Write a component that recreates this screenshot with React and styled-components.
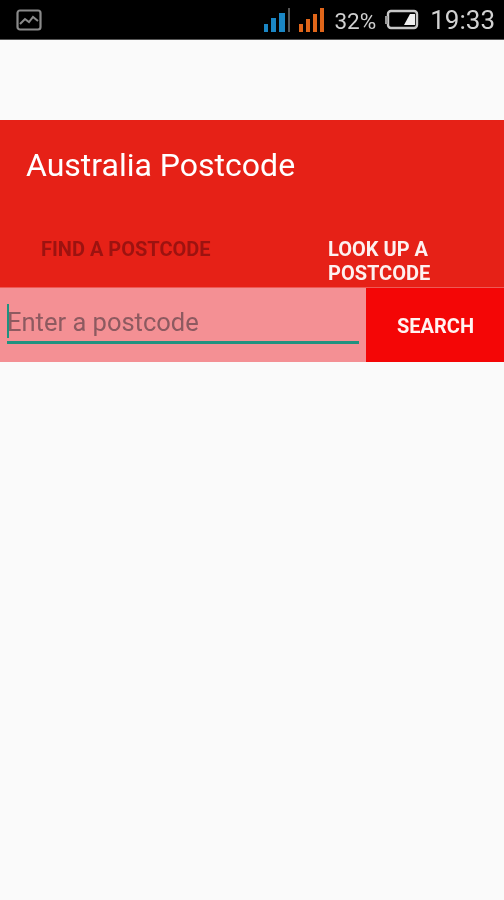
import React from "react";
import styled, { createGlobalStyle } from "styled-components";

const Global = createGlobalStyle`
  html, body { margin: 0; padding: 0; background: #fafafa; }
  * { box-sizing: border-box; }
`;

const Screen = styled.div`
  width: 504px;
  height: 900px;
  background: #fafafa;
  font-family: Roboto, "Liberation Sans", sans-serif;
  overflow: hidden;
  filter: blur(0.7px);
`;

const StatusBar = styled.div`
  height: 40px;
  background: #000;
  display: flex;
  align-items: center;
  padding: 0 9px 0 16px;
  border-bottom: 1px solid #555;
`;

const StatusRight = styled.div`
  margin-left: auto;
  display: flex;
  align-items: center;
`;

const Percent = styled.span`
  color: #cfcfcf;
  font-size: 22.5px;
  margin: 2px 9px 0 9px;
`;

const Clock = styled.span`
  color: #d2d2d2;
  font-size: 26px;
  margin-left: 11px;
`;

const TopGap = styled.div`
  height: 80px;
`;

const AppBar = styled.header`
  height: 167px;
  background: #e62117;
  display: flex;
  flex-direction: column;
`;

const Title = styled.h1`
  margin: 0;
  height: 90px;
  padding: 0 0 0 26px;
  display: flex;
  align-items: center;
  font-size: 32px;
  font-weight: 400;
  color: #fff;
`;

const Tabs = styled.div`
  flex: 1;
  display: flex;
`;

const Tab = styled.div`
  flex: 1;
  display: flex;
  justify-content: center;
  padding-top: 27px;
  padding-left: ${(p) => p.$inset}px;
`;

const TabLabel = styled.span`
  width: ${(p) => p.$width}px;
  font-size: 20px;
  line-height: 24px;
  font-weight: 700;
  color: ${(p) => (p.$active ? "#fdf1f0" : "#9c1310")};
`;

const SearchRow = styled.div`
  height: 75px;
  display: flex;
  border-top: 1px solid #ee5a55;
`;

const Field = styled.div`
  width: 366px;
  background: #f49094;
  padding: 15px 7px 0;
`;

const InputBox = styled.div`
  height: 41px;
  border-bottom: 3px solid #20917f;
  display: flex;
  align-items: center;
  padding-bottom: 2px;
`;

const Caret = styled.span`
  width: 2px;
  height: 34px;
  margin-right: -2px;
  background: #20917f;
`;

const Placeholder = styled.span`
  font-size: 25.5px;
  color: #8d5a60;
  padding-top: 2px;
`;

const SearchButton = styled.button`
  flex: 1;
  border: 0;
  padding: 2px 0 0 1px;
  background: #f40606;
  color: #fff3f2;
  font-family: inherit;
  font-size: 20px;
  font-weight: 700;
`;

const GalleryIcon = () => (
  <svg width="26" height="22" viewBox="0 0 26 22" fill="none" stroke="#8a8a8a" strokeWidth="2.2">
    <rect x="1.5" y="1.5" width="23" height="19" rx="2.5" />
    <path d="M4 15l5-5 4 3 4-5 5 4" strokeWidth="2" />
  </svg>
);

const SignalBars = () => (
  <svg width="62" height="26" viewBox="0 0 62 26">
    <g fill="#1a86c4">
      <rect x="1" y="17" width="4" height="8" />
      <rect x="8" y="11" width="5" height="14" />
      <rect x="16" y="6" width="6" height="19" />
    </g>
    <rect x="25" y="1" width="2" height="24" fill="#555" />
    <g fill="#e0661a">
      <rect x="36" y="17" width="4" height="8" />
      <rect x="43" y="12" width="4" height="13" />
      <rect x="50" y="7" width="4" height="18" />
      <rect x="57" y="1" width="4" height="24" />
    </g>
  </svg>
);

const Battery = () => (
  <svg width="34" height="22" viewBox="0 0 34 22">
    <rect x="3" y="2" width="29" height="17" rx="3" fill="none" stroke="#c8c8c8" strokeWidth="2.4" />
    <rect x="0" y="7" width="3" height="8" fill="#999" />
    <path d="M19 16l6-11h5v11z" fill="#f0f0f0" />
  </svg>
);

export default function App() {
  return (
    <Screen>
      <Global />
      <StatusBar>
        <GalleryIcon />
        <StatusRight>
          <SignalBars />
          <Percent>32%</Percent>
          <Battery />
          <Clock>19:33</Clock>
        </StatusRight>
      </StatusBar>
      <TopGap />
      <AppBar>
        <Title>Australia Postcode</Title>
        <Tabs>
          <Tab $inset={1}>
            <TabLabel $width={170}>FIND A POSTCODE</TabLabel>
          </Tab>
          <Tab $inset={3}>
            <TabLabel $width={102} $active>LOOK UP A POSTCODE</TabLabel>
          </Tab>
        </Tabs>
      </AppBar>
      <SearchRow>
        <Field>
          <InputBox>
            <Caret />
            <Placeholder>Enter a postcode</Placeholder>
          </InputBox>
        </Field>
        <SearchButton>SEARCH</SearchButton>
      </SearchRow>
    </Screen>
  );
}
